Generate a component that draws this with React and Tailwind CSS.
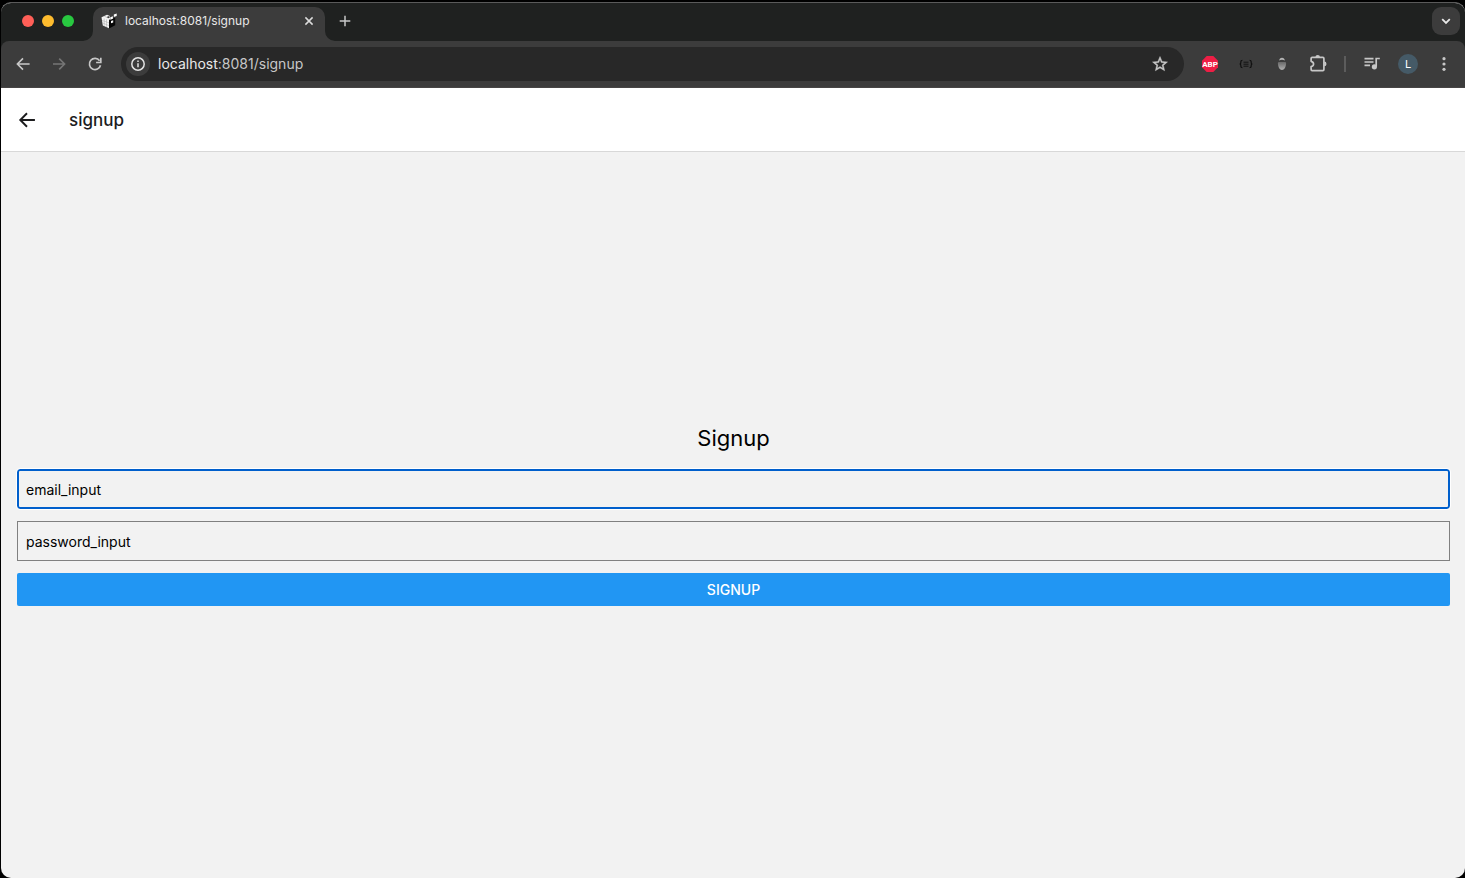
import React from "react";

function ArrowIcon({ className = "", size = 20, flip = false, width = 1.6 }) {
  return (
    <svg width={size} height={size} viewBox="0 0 20 20" fill="none" stroke="currentColor" strokeWidth={width} className={className} aria-hidden="true">
      {flip ? <path d="M4 10h11.3M10.2 4.6l5.4 5.4-5.4 5.4" /> : <path d="M16.6 10H4.7M10 4.4L4.4 10l5.6 5.6" />}
    </svg>
  );
}

function ReloadIcon() {
  return (
    <svg width="20" height="20" viewBox="0 0 20 20" fill="none" stroke="currentColor" strokeWidth="1.7" aria-hidden="true">
      <path d="M15.5 11.2A5.6 5.6 0 1 1 14.6 6.7" />
      <path d="M15.8 3.8v4.7h-4.7" />
    </svg>
  );
}

function CubeIcon() {
  return (
    <svg width="16" height="16" viewBox="0 0 16 16" aria-hidden="true">
      <path d="M0.5 4.2L6 1.8l3 1.3v3l-1 .8v8.4L1.8 12.4z" fill="#f4f4f4" />
      <path d="M8 7.2l6.2-2.4v7.4L8 15.6z" fill="#070707" />
      <path d="M1 7.3l7 2.6M1.4 9.9l6.6 2.7M3.2 5.4v7.4M5.5 6.4v7.6M3.2 3.2L8 5.4" stroke="#a5a5a5" strokeWidth="0.5" fill="none" />
      <path d="M5.6 4.1l2-.9 1.8.8-2 .9z" fill="#222" />
      <path d="M9.3 4.3l2.6-1v2.4l-2.600 1zM12.800 1.400l2.900-.9v2.600l-2.900 1zM10 8l2.200-.8v2.200l-2.200.8z" fill="#fff" />
    </svg>
  );
}

function TabFlare({ className, right = false }) {
  return (
    <svg width="10" height="10" viewBox="0 0 10 10" className={className} aria-hidden="true">
      <path d={right ? "M0 0A10 10 0 0 0 10 10H0z" : "M10 0A10 10 0 0 1 0 10H10z"} fill="#3c3c3c" />
    </svg>
  );
}

function IconButton({ label, className = "", children }) {
  return (
    <button type="button" aria-label={label} className={`flex shrink-0 items-center justify-center ${className}`}>
      {children}
    </button>
  );
}

function TabStrip() {
  return (
    <div className="flex h-[38px] items-end bg-[#1f2120]">
      <div className="flex h-10 shrink-0 items-center gap-2 pl-[21px]">
        <button type="button" aria-label="Close window" className="size-3 rounded-full bg-[#ff5f57]" />
        <button type="button" aria-label="Minimize window" className="size-3 rounded-full bg-[#febc2e]" />
        <button type="button" aria-label="Zoom window" className="size-3 rounded-full bg-[#28c840]" />
      </div>
      <div className="relative ml-[19px] flex h-[34px] w-[232px] shrink-0 items-center rounded-t-[10px] bg-[#3c3c3c] pr-2 pb-1.5 pl-2">
        <TabFlare className="absolute bottom-0 -left-2.5" />
        <TabFlare right className="absolute -right-2.5 bottom-0" />
        <CubeIcon />
        <span className="ml-2 flex-1 text-xs text-[#e8e8e8]">localhost:8081/signup</span>
        <IconButton label="Close tab" className="size-4 text-[#dcdcdc]">
          <svg width="16" height="16" viewBox="0 0 16 16" stroke="currentColor" strokeWidth="1.5" aria-hidden="true">
            <path d="M4.400 4.400l7.200 7.200M11.600 4.400l-7.200 7.200" />
          </svg>
        </IconButton>
      </div>
      <IconButton label="New tab" className="ml-2.5 h-10 w-5 text-[#c7c7c7]">
        <svg width="16" height="16" viewBox="0 0 16 16" stroke="currentColor" strokeWidth="1.5" aria-hidden="true">
          <path d="M8 2.700v10.600M2.700 8h10.600" />
        </svg>
      </IconButton>
      <IconButton label="Search tabs" className="mr-[5px] mb-1.5 ml-auto size-7 rounded-[9px] bg-[#3c3c3c] text-[#e8e8e8]">
        <svg width="16" height="16" viewBox="0 0 16 16" fill="none" stroke="currentColor" strokeWidth="1.8" aria-hidden="true">
          <path d="M4.200 6.200L8 10l3.800-3.800" />
        </svg>
      </IconButton>
    </div>
  );
}

function Toolbar() {
  return (
    <div className="bg-[#1f2120]">
      <div className="flex h-[47px] items-center rounded-t-lg border-b border-[#474545] bg-[#3c3c3c] pr-[11px] pl-3">
        <IconButton label="Back" className="size-5 text-[#c7c7c7]"><ArrowIcon /></IconButton>
        <IconButton label="Forward" className="ml-4 size-5 text-[#757575]"><ArrowIcon flip /></IconButton>
        <IconButton label="Reload" className="ml-4 size-5 text-[#c7c7c7]"><ReloadIcon /></IconButton>
        <div className="ml-4 flex h-[34px] min-w-0 flex-1 items-center rounded-full bg-[#282828] pr-3.5 pl-[5px]">
          <IconButton label="View site information" className="size-6 rounded-full bg-[#3c3c3c] text-[#e3e3e3]">
            <svg width="16" height="16" viewBox="0 0 16 16" fill="none" stroke="currentColor" strokeWidth="1.5" aria-hidden="true">
              <circle cx="8" cy="8" r="6.200" />
              <path d="M8 7.200v4M8 4.500v1.600" />
            </svg>
          </IconButton>
          <a href="#address" className="ml-2 flex-1 text-sm text-[#c7c7c7]"><span className="text-[#e8e8e8]">localhost</span>:8081/signup</a>
          <IconButton label="Bookmark this tab" className="size-5 text-[#c7c7c7]">
            <svg width="18" height="18" viewBox="0 0 24 24" fill="currentColor" stroke="currentColor" strokeWidth="0.6" aria-hidden="true">
              <path d="M22 9.240l-7.190-.620L12 2 9.190 8.630 2 9.240l5.460 4.730L5.820 21 12 17.270 18.180 21l-1.630-7.030L22 9.240zM12 15.400l-3.760 2.270 1-4.280-3.320-2.880 4.380-.380L12 6.100l1.710 4.040 4.380.380-3.320 2.880 1 4.280L12 15.400z" />
            </svg>
          </IconButton>
        </div>
        <IconButton label="Adblock Plus" className="ml-4 size-5">
          <svg width="18" height="18" viewBox="0 0 18 18" aria-hidden="true">
            <path d="M5.700 1h6.600L17 5.700v6.600L12.300 17H5.700L1 12.300V5.700z" fill="#ed1e45" />
            <text x="9" y="12" textAnchor="middle" fontSize="8" fontWeight="700" fill="#fff" fontFamily="Roboto, sans-serif">ABP</text>
          </svg>
        </IconButton>
        <IconButton label="JSON viewer" className="ml-4 size-5">
          <svg width="16" height="16" viewBox="0 0 16 16" fill="none" stroke="#101010" strokeWidth="1.2" aria-hidden="true">
            <path d="M4.400 4.400c-1.400 0-1.600.4-1.600 1.400v1.200c0 .7-.4 1-1.200 1 .8 0 1.200.3 1.200 1v1.200c0 1 .2 1.400 1.600 1.400M11.600 4.400c1.400 0 1.600.4 1.600 1.400v1.200c0 .7.4 1 1.200 1-.8 0-1.200.3-1.200 1v1.200c0 1-.2 1.400-1.600 1.400" />
            <path d="M5.500 6.200h5M5.500 8.200h5M5.500 10.200h5" strokeWidth="0.900" />
          </svg>
        </IconButton>
        <IconButton label="Extension" className="ml-4 size-5">
          <svg width="16" height="16" viewBox="0 0 16 16" aria-hidden="true">
            <defs>
              <linearGradient id="acorn" x1="0" y1="0" x2="0" y2="1">
                <stop offset="0" stopColor="#686868" />
                <stop offset="1" stopColor="#b0b0b0" />
              </linearGradient>
            </defs>
            <path d="M5.200 4.400C5.400 2.600 6.400 1.700 8 1.700s2.600.9 2.800 2.700C9 3.500 7 3.500 5.200 4.400z" fill="#b4b4b4" />
            <path d="M4.800 6h6.400c1 0 1 1.200.8 2.300-.4 3.300-1.600 5.700-4 5.700s-3.600-2.400-4-5.700C3.800 7.200 3.800 6 4.800 6z" fill="url(#acorn)" />
          </svg>
        </IconButton>
        <IconButton label="Extensions" className="ml-4 size-5 text-[#c7c7c7]">
          <svg width="20" height="20" viewBox="0 0 20 20" fill="none" stroke="currentColor" strokeWidth="1.700" strokeLinejoin="round" aria-hidden="true">
            <path d="M4.100 3.400H14.900Q15.900 3.400 15.900 4.400V15.600Q15.900 16.600 14.900 16.600H4.100Q3.100 16.600 3.100 15.600V12.700C6.400 12 6.400 8 3.100 7.300V4.400Q3.100 3.400 4.100 3.400z" />
            <path d="M7.400 3.200a2.300 2.300 0 0 1 4.600 0zM16.200 7.600a2.300 2.300 0 0 1 0 4.600z" fill="currentColor" stroke="none" />
          </svg>
        </IconButton>
        <div className="ml-4 h-4 w-0.5 bg-[#5c5c5c]" />
        <IconButton label="Media controls" className="ml-4 size-5 text-[#c7c7c7]">
          <svg width="20" height="20" viewBox="0 0 20 20" fill="none" stroke="currentColor" strokeWidth="1.700" aria-hidden="true">
            <path d="M2.500 4.700h9M2.500 8h9M2.500 11.300h5.500M14.200 12.500V4.500h3.600" />
            <circle cx="12.400" cy="12.800" r="2.600" fill="currentColor" stroke="none" />
          </svg>
        </IconButton>
        <button type="button" aria-label="Profile" className="ml-4 size-5 shrink-0 rounded-full bg-[#455a67] text-[11px] leading-5 text-white">L</button>
        <IconButton label="Menu" className="ml-4 size-5 text-[#c7c7c7]">
          <svg width="20" height="20" viewBox="0 0 20 20" fill="currentColor" aria-hidden="true">
            <circle cx="10" cy="4.700" r="1.600" /><circle cx="10" cy="10" r="1.600" /><circle cx="10" cy="15.300" r="1.600" />
          </svg>
        </IconButton>
      </div>
    </div>
  );
}

export default function App() {
  return (
    <div className="flex min-h-screen flex-col bg-black pt-0.5 pl-px font-['Inter',sans-serif]">
      <div className="flex flex-1 flex-col overflow-hidden rounded-[10px] border-t border-[#5a5a5a] bg-[#f2f2f2]">
        <TabStrip />
        <Toolbar />
        <header className="flex h-16 items-center border-b border-[#d8d8d8] bg-white pl-3.5">
          <IconButton label="Go back" className="size-6 text-[#1c1c1e]"><ArrowIcon size={24} /></IconButton>
          <h1 className="ml-[30px] text-[17px] leading-6 font-medium text-[#1c1c1e]">signup</h1>
        </header>
        <main className="flex flex-1 flex-col justify-center pr-[15px] pl-4">
          <form className="flex flex-col gap-3" onSubmit={(e) => e.preventDefault()}>
            <h2 className="mb-1 text-center text-[22px] leading-[29px] text-black">Signup</h2>
            <input aria-label="Email" type="text" defaultValue="email_input" className="h-10 rounded-[3px] border-2 border-[#005fcc] px-[7px] text-sm text-black outline-1 outline-white" />
            <input aria-label="Password" type="text" defaultValue="password_input" className="h-10 border border-[#808080] px-2 text-sm text-black outline-none" />
            <button type="submit" className="h-[33px] rounded-[2px] bg-[#2196f3] text-sm font-medium text-white">SIGNUP</button>
          </form>
        </main>
      </div>
    </div>
  );
}
